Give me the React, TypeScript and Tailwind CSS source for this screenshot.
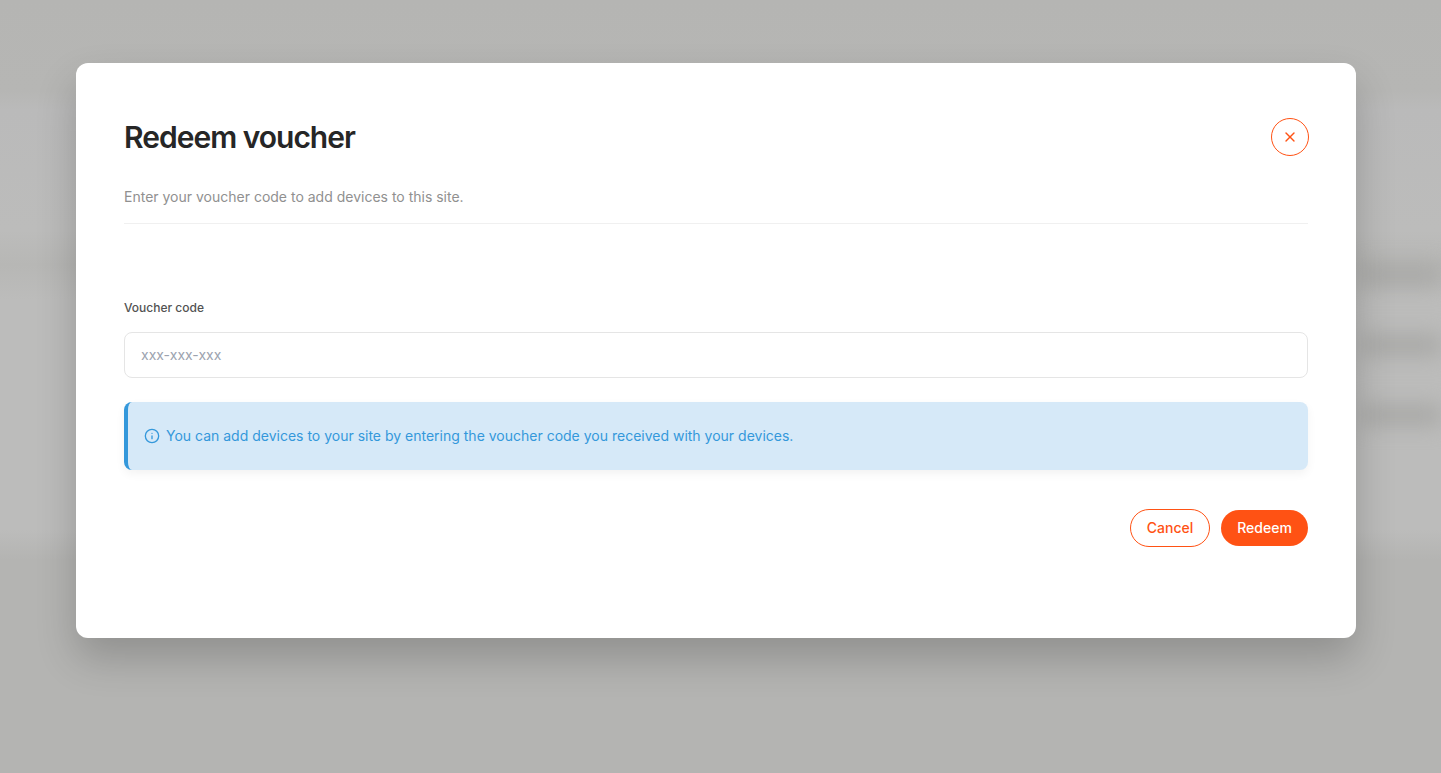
import { Info, X } from "lucide-react";

function BackdropRow() {
	return (
		<div className="ml-auto h-[22px] w-[80px] rounded bg-[#a9a9a7] blur-[10px]" />
	);
}

export default function App() {
	return (
		<div className="relative h-[773px] w-full overflow-hidden bg-[linear-gradient(180deg,#b5b5b3_0px,#b6b6b4_90px,#bababa_110px,#bcbcbb_230px,#b7b7b5_265px,#bcbcbb_300px,#bcbcbb_530px,#b4b4b2_560px,#b4b4b2_773px)] font-['Inter',sans-serif]">

			<div className="absolute top-[264px] right-0 flex w-[110px] flex-col gap-[48px]">
				<BackdropRow />
				<BackdropRow />
				<BackdropRow />
			</div>

			<div className="relative flex h-full items-start pt-[63px] pl-[76px]">

				<div className="flex h-[575px] w-[1280px] flex-col rounded-xl bg-white px-12 pt-[54px] shadow-[0_20px_40px_rgba(0,0,0,0.2)]">

					<div className="flex items-center justify-between">
						<h1 className="text-3xl leading-10 font-semibold tracking-[-1px] text-[#262626]">Redeem voucher</h1>
						<button className="-mr-px flex size-[38px] items-center justify-center rounded-full border border-[#ff5214] text-[#ff5214]">
							<X size={16} strokeWidth={2} />
						</button>
					</div>

					<p className="mt-[30px] text-sm leading-5 text-[#909090]">Enter your voucher code to add devices to this site.</p>

					<div className="mt-4 border-b border-[#f0f0f0]" />

					<label className="mt-[76px] text-xs leading-4 font-medium text-[#525252]">Voucher code</label>

					<input
						className="mt-4 h-[46px] w-full rounded-lg border border-[#e5e5e5] px-4 pb-[2px] text-sm text-[#262626] outline-none placeholder:text-[#9ca3af]"
						placeholder="xxx-xxx-xxx"
					/>

					<div className="mt-6 flex h-[68px] items-center gap-[6px] rounded-lg border-l-4 border-[#3498db] bg-[#d6e9f8] pl-4 text-sm text-[#3498db] shadow-[0_4px_10px_rgba(0,0,0,0.05)]">
						<Info size={16} strokeWidth={2} />
						<span>You can add devices to your site by entering the voucher code you received with your devices.</span>
					</div>

					<div className="mt-[39px] flex items-center justify-end gap-[11px]">
						<button className="h-[38px] w-20 rounded-full border border-[#ff5214] text-sm font-medium text-[#ff5214]">Cancel</button>
						<button className="h-9 w-[87px] rounded-full bg-[#ff5214] text-sm font-medium text-white">Redeem</button>
					</div>
				</div>
			</div>
		</div>
	);
}
